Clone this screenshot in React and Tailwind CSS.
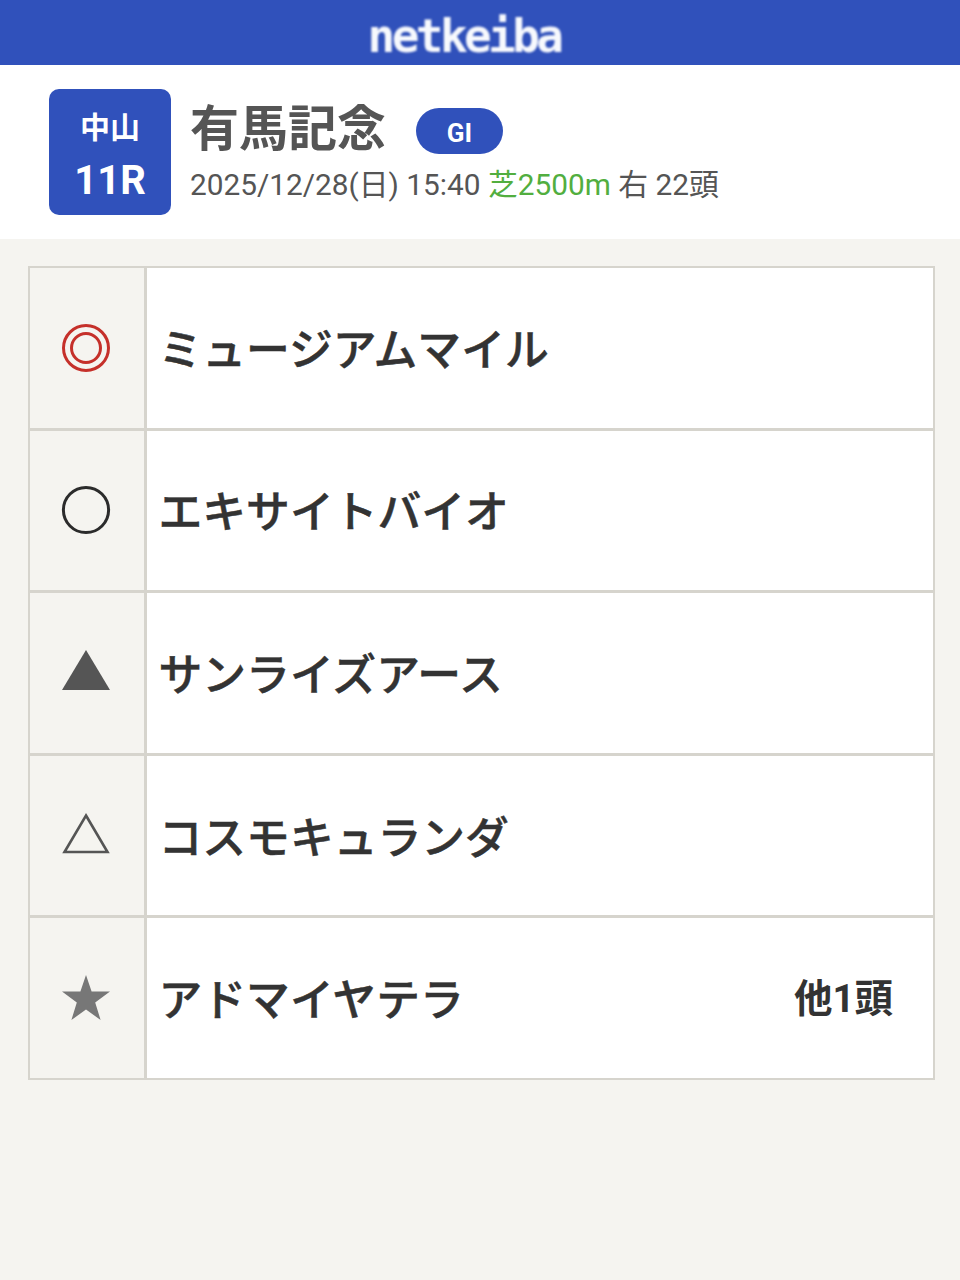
const jp = '"Roboto", "Noto Sans CJK JP", sans-serif';

const picks = [
  { mark: "double", name: "ミュージアムマイル" },
  { mark: "circle", name: "エキサイトバイオ" },
  { mark: "filled", name: "サンライズアース" },
  { mark: "hollow", name: "コスモキュランダ" },
  { mark: "star", name: "アドマイヤテラ", note: "他1頭" },
];

function Mark({ type }) {
  return (
    <svg width="50" height="50" viewBox="0 0 50 50">
      {type === "double" && (
        <g fill="none" stroke="#c5302a" strokeWidth="3">
          <circle cx="25" cy="25" r="22.5" />
          <circle cx="25" cy="25" r="14.5" />
        </g>
      )}
      {type === "circle" && <circle cx="25" cy="25" r="22.6" fill="none" stroke="#2b2b2b" strokeWidth="3" />}
      {type === "filled" && <polygon points="25,2 49,42 1,42" fill="#555555" />}
      {type === "hollow" && <polygon points="25,4.5 46.5,41 3.5,41" fill="none" stroke="#555555" strokeWidth="2.6" />}
      {type === "star" && <polygon points="25,2 30.6,18.6 49,18.6 34.2,29.6 39.6,47 25,36.6 10.4,47 15.8,29.6 1,18.6 19.4,18.6" fill="#777777" />}
    </svg>
  );
}

function Row({ pick }) {
  return (
    <div className="flex h-[159.6px] gap-[3px] bg-[#d6d4cd]">
      <div className="flex w-[113.5px] shrink-0 items-center justify-center bg-[#f5f4f0] pr-[1.5px]">
        <Mark type={pick.mark} />
      </div>
      <div className="flex flex-1 items-center justify-between bg-white pl-[12px] pr-[40px]">
        <span className="mt-[8px] text-[43.8px] leading-none font-medium text-[#333333] [-webkit-text-stroke:0.5px_#333333]">{pick.name}</span>
        {pick.note && <span className="mt-[2px] text-[38.5px] leading-none font-bold text-[#333333]">{pick.note}</span>}
      </div>
    </div>
  );
}

export default function App() {
  return (
    <div className="min-h-[1280px] bg-[#f5f4f0]" style={{ fontFamily: jp }}>
      <header className="flex h-[65px] items-center justify-center overflow-hidden bg-[#3051bb] pt-[6px] pr-[32px]">
        <span
          className="text-[46px] leading-none font-bold tracking-[-3.6px] text-[#f7f9fd] blur-[0.8px]"
          style={{ fontFamily: '"DejaVu Sans Mono", monospace' }}
        >
          netkeiba
        </span>
      </header>

      <section className="flex h-[174px] items-center gap-[19px] bg-white pl-[49px]">
        <div className="flex h-[126px] w-[122px] flex-col items-center justify-center rounded-[10px] bg-[#3051bb] pt-[10px] text-white">
          <span className="text-[30px] leading-[38px] font-bold">中山</span>
          <span className="mt-[10px] text-[40px] leading-[48px] font-bold">11R</span>
        </div>
        <div className="flex flex-col">
          <div className="flex items-center gap-[30px]">
            <h1 className="mb-[2px] text-[49px] leading-[60px] font-bold text-[#555555]">有馬記念</h1>
            <span className="flex h-[46px] w-[87px] items-center justify-center rounded-full bg-[#3051bb] pt-[5px] text-[26px] font-bold text-white">
              GI
            </span>
          </div>
          <p className="mt-[3px] text-[29.8px] leading-[40px] text-[#555555]">
            2025/12/28(日) 15:40 <span className="text-[#52ae3f]">芝2500m</span> 右 22頭
          </p>
        </div>
      </section>

      <div className="ml-[28px] mt-[27px] flex w-[907px] flex-col gap-[3px] border-2 border-[#d6d4cd] bg-[#d6d4cd]">
        {picks.map((pick) => (
          <Row key={pick.name} pick={pick} />
        ))}
      </div>
    </div>
  );
}
